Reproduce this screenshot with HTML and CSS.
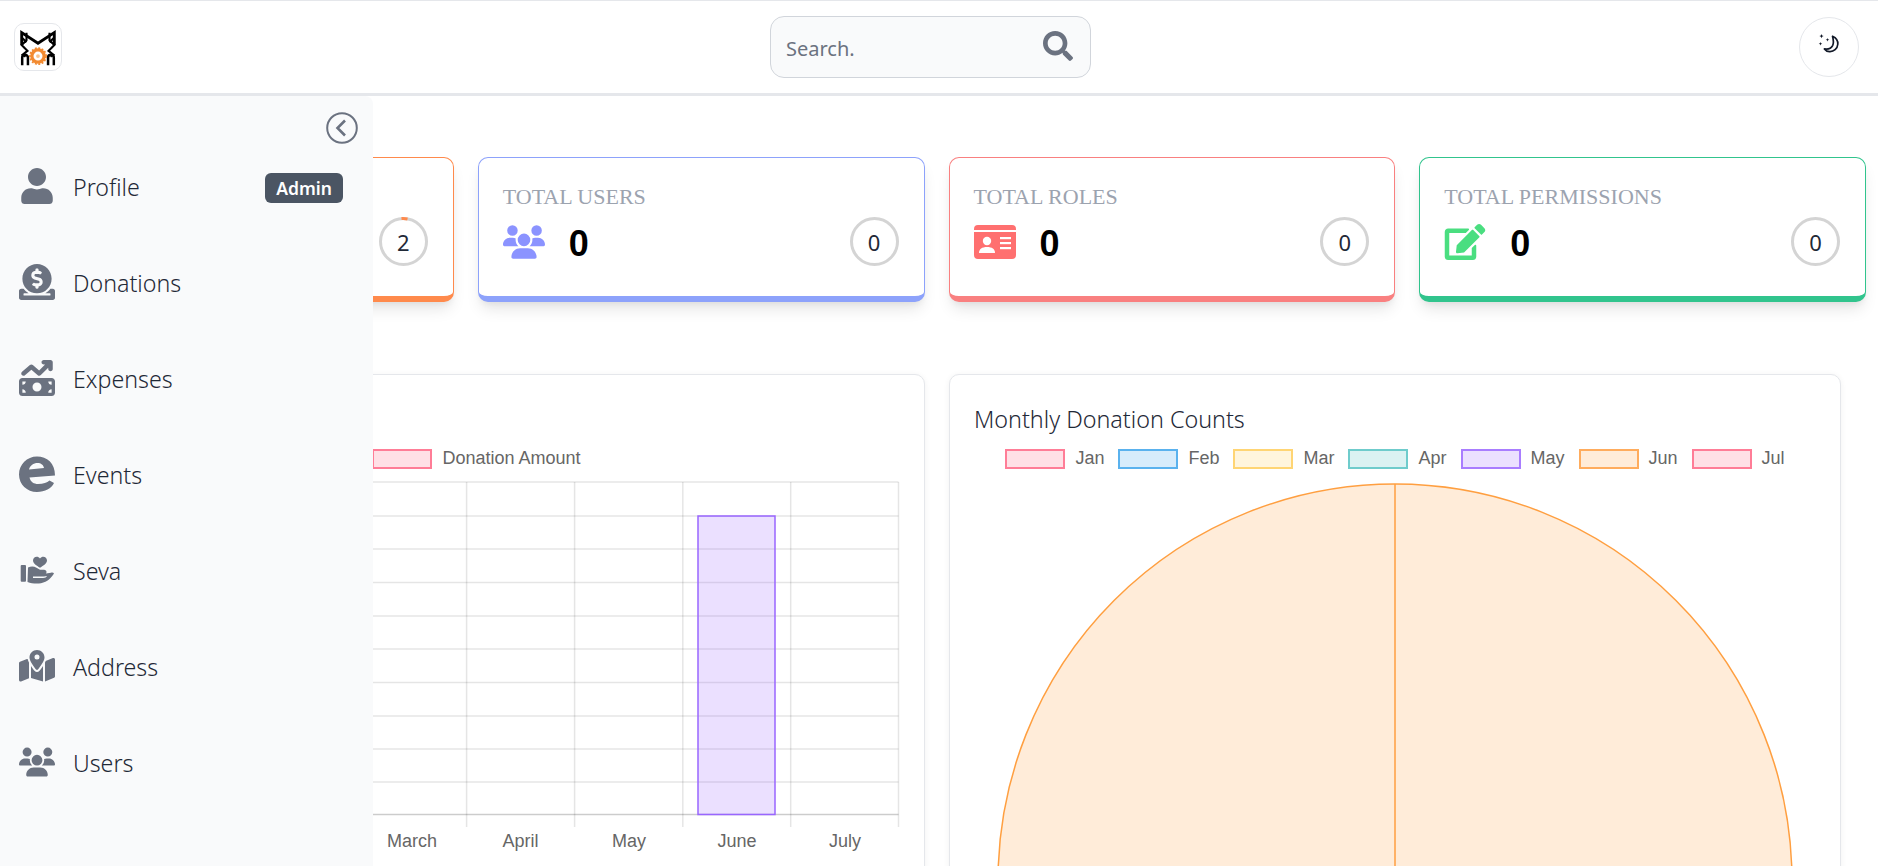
FILE: index.html
```html
<!DOCTYPE html>
<html lang="en">
<head>
<meta charset="utf-8">
<title>Dashboard</title>
<link rel="stylesheet" href="styles.css">
</head>
<body>
<header class="topbar">
  <div class="logo">
    <svg viewBox="0 0 48 48" class="logo-mark">
      <g fill="none" stroke="#000" stroke-width="2.200">
        <path d="M7 22V9l17 11L41 9v13" stroke-width="3"/>
        <path d="M12 9v8l-5 5 3 3 3 3-5 4 3 2M36 9v8l5 5-3 3-3 3 5 4-3 2M7 14l5 5M41 14l-5 5"/>
        <path d="M7.500 43v-8a3 3 0 0 1 6 0v8M34.500 43v-8a3 3 0 0 1 6 0v8" stroke-width="2.600"/>
      </g>
      <circle cx="24" cy="33.500" r="6.400" fill="#fff" stroke="#f28a30" stroke-width="3.400"/>
      <circle cx="24" cy="33.500" r="8.400" fill="none" stroke="#f28a30" stroke-width="1.800" stroke-dasharray="2 1.600"/>
      <circle cx="24" cy="33.500" r="2" fill="#f9c48e"/>
    </svg>
  </div>
  <div class="search">
    <span class="search-text">Search.</span>
    <svg class="search-icon" viewBox="0 0 512 512"><path d="M505 442.700L405.300 343c-4.500-4.500-10.600-7-17-7H372c27.600-35.300 44-79.700 44-128C416 93.100 322.900 0 208 0S0 93.100 0 208s93.100 208 208 208c48.300 0 92.700-16.400 128-44v16.300c0 6.400 2.500 12.500 7 17l99.700 99.700c9.400 9.400 24.600 9.400 33.900 0l28.300-28.300c9.400-9.400 9.400-24.600.1-34zM208 336c-70.700 0-128-57.200-128-128 0-70.700 57.200-128 128-128 70.700 0 128 57.200 128 128 0 70.700-57.200 128-128 128z"/></svg>
  </div>
  <div class="theme-btn">
    <svg viewBox="0 0 22 22" class="moon">
      <path d="M14.500 3.200c3.600 1.600 5.600 4.400 5.300 8-.4 4.600-4 7.600-8.200 7.400-2.200-.1-4-1-5.200-2.700 4 .6 6.800-.6 8.200-3.300 1.100-2.300 1-5.500-.1-9.400z" fill="none" stroke="#111827" stroke-width="1.700" stroke-linejoin="round"/>
      <path d="M3.500 1l.6 1.500 1.500.6-1.500.6-.6 1.500-.6-1.500-1.500-.6 1.500-.6zM9.500 5l.5 1.300 1.300.5-1.300.5-.5 1.300-.5-1.300-1.300-.5 1.300-.5zM2.500 9l.5 1.300 1.300.5-1.300.5-.5 1.300-.5-1.300L.7 10.800l1.300-.5z" fill="#111827"/>
    </svg>
  </div>
</header>

<aside class="sidebar">
  <div class="collapse-row">
    <svg class="collapse" viewBox="0 0 32 32"><circle cx="16" cy="16" r="14.800" fill="none" stroke="#6b7280" stroke-width="2"/><path d="M19 8.500 11.500 16l7.500 7.500" fill="none" stroke="#6b7280" stroke-width="2.600"/></svg>
  </div>
  <nav>
    <a class="nav-row">
      <svg class="nav-icon" viewBox="0 0 448 512"><path d="M224 256c70.700 0 128-57.300 128-128S294.700 0 224 0 96 57.300 96 128s57.300 128 128 128zm89.600 32h-16.700c-22.200 10.200-46.900 16-72.900 16s-50.600-5.800-72.900-16h-16.700C60.200 288 0 348.200 0 422.400V464c0 26.500 21.500 48 48 48h352c26.500 0 48-21.500 48-48v-41.600c0-74.200-60.200-134.400-134.400-134.400z"/></svg>
      <span class="nav-label">Profile</span>
      <span class="badge">Admin</span>
    </a>
    <a class="nav-row">
      <svg class="nav-icon" viewBox="0 0 512 512"><path d="M256 416c114.900 0 208-93.100 208-208S370.900 0 256 0 48 93.100 48 208s93.100 208 208 208zM233.800 97.400V80.600c0-9.200 7.400-16.600 16.600-16.600h11.100c9.200 0 16.600 7.400 16.600 16.600v17c15.500.8 30.500 6.100 43 15.400 5.600 4.100 6.200 12.300 1.200 17.100L306 145.600c-3.800 3.700-9.500 3.800-14 1-5.400-3.400-11.400-5.100-17.800-5.100h-38.900c-9 0-16.300 8.200-16.300 18.300 0 8.200 5 15.500 12.100 17.600l62.300 18.700c25.700 7.700 43.700 32.400 43.700 60.100 0 34-26.400 61.500-59.100 62.400v16.800c0 9.200-7.400 16.600-16.600 16.600h-11.100c-9.200 0-16.600-7.400-16.600-16.600v-17c-15.500-.8-30.500-6.100-43-15.400-5.600-4.100-6.200-12.300-1.200-17.100l16.300-15.500c3.800-3.700 9.500-3.800 14-1 5.400 3.400 11.400 5.100 17.800 5.100h38.900c9 0 16.300-8.200 16.300-18.300 0-8.200-5-15.500-12.100-17.600l-62.300-18.700c-25.700-7.700-43.700-32.400-43.700-60.100.1-34 26.400-61.500 59.100-62.400zM480 352h-32.500c-19.600 26-44.600 47.700-73 64h63.800c5.300 0 9.600 3.600 9.600 8v16c0 4.400-4.300 8-9.600 8H73.600c-5.300 0-9.600-3.600-9.600-8v-16c0-4.400 4.300-8 9.600-8h63.800c-28.400-16.300-53.300-38-73-64H32c-17.700 0-32 14.300-32 32v96c0 17.700 14.300 32 32 32h448c17.700 0 32-14.300 32-32v-96c0-17.700-14.300-32-32-32z"/></svg>
      <span class="nav-label">Donations</span>
    </a>
    <a class="nav-row">
      <svg class="nav-icon" viewBox="0 0 512 512"><path d="M470.700 9.400c3 3.100 5.300 6.600 6.900 10.300s2.400 7.800 2.400 12.200l0 .1v0 96c0 17.700-14.300 32-32 32s-32-14.300-32-32V109.300L310.600 214.600c-11.800 11.800-30.800 12.600-43.500 1.700L176 138.100 84.800 216.300c-13.400 11.500-33.600 9.900-45.100-3.500s-9.900-33.600 3.500-45.100l112-96c12-10.300 29.700-10.300 41.700 0l89.500 76.700L370.700 64H352c-17.700 0-32-14.300-32-32s14.300-32 32-32h96c8.800 0 16.800 3.600 22.600 9.300l.1 .1zM0 304c0-26.500 21.500-48 48-48H464c26.500 0 48 21.500 48 48V464c0 26.500-21.500 48-48 48H48c-26.500 0-48-21.500-48-48V304zM48 416v48H96c0-26.500-21.500-48-48-48zM96 304H48v48c26.500 0 48-21.500 48-48zM464 416c-26.500 0-48 21.500-48 48h48V416zM416 304c0 26.500 21.500 48 48 48V304H416zm-96 80a64 64 0 1 0 -128 0 64 64 0 1 0 128 0z"/></svg>
      <span class="nav-label">Expenses</span>
    </a>
    <a class="nav-row">
      <svg class="nav-icon" viewBox="0 0 36 36"><path fill-rule="evenodd" d="M18 .5C28 .5 36 7 36 19.500L10.500 21.500C11.500 26 15 28 19 28c5.500 0 9-1.500 11.500-3.500L35 27c-2.500 5.500-9 9-17 9C8 36 0 28.500 0 18.500S8 .5 18 .5zM10 13.500l15-1.500c-.5-3-3-5-6.500-5-4 0-7.500 2.500-8.500 6.500z"/></svg>
      <span class="nav-label">Events</span>
    </a>
    <a class="nav-row">
      <svg class="nav-icon" viewBox="0 0 36 36"><path d="M28 8.500c0-2.200-1.800-3.800-3.700-3.800-1.300 0-2.500.6-3.300 1.700-.8-1.100-2-1.700-3.300-1.700-1.900 0-3.700 1.600-3.700 3.800 0 3 3.500 5 7 7.200 3.500-2.200 7-4.200 7-7.200z"/><rect x="1.700" y="13" width="5.300" height="16.700" rx="1"/><path fill-rule="evenodd" d="M9 15.500c3-1.300 6-1.300 8.500.3l3.500 2h4c1.500 0 2.500 1 2.500 2.200 0 .5-.2 1-.5 1.500l5-.8c1.500-.3 2.500 0 3 .8-2.500 4-6.500 8.500-13 9.700-4.500.8-9.500.2-13.500-1.200zM14 26h10c2 0 3.500-1 4-2-1 .3-2 .5-3 .5H14z"/></svg>
      <span class="nav-label">Seva</span>
    </a>
    <a class="nav-row">
      <svg class="nav-icon" viewBox="0 0 576 512"><path d="M408 120c0 54.600-73.100 151.900-105.200 192c-7.700 9.600-22 9.600-29.600 0C241.100 271.900 168 174.600 168 120C168 53.700 221.700 0 288 0s120 53.700 120 120zm8 80.400c3.500-6.900 6.700-13.800 9.600-20.600c.5-1.200 1-2.500 1.500-3.700l116-46.400C558.900 123.400 576 135 576 152V422.800c0 9.800-6 18.600-15.100 22.300L416 503V200.400zM137.600 138.300c2.400 14.100 7.200 28.300 12.800 41.500c2.900 6.800 6.100 13.700 9.600 20.600V451.800L32.900 502.700C17.100 509 0 497.400 0 480.400V209.600c0-9.800 6-18.600 15.100-22.300l122.600-49zM327.800 332c13.900-17.400 35.700-45.700 56.200-77V504.300L192 449.400V255c20.500 31.300 42.300 59.600 56.200 77c20.500 25.600 59.100 25.600 79.600 0zM288 152a40 40 0 1 0 0-80 40 40 0 1 0 0 80z"/></svg>
      <span class="nav-label">Address</span>
    </a>
    <a class="nav-row">
      <svg class="nav-icon" viewBox="0 0 640 512"><path d="M144 0a80 80 0 1 1 0 160A80 80 0 1 1 144 0zM512 0a80 80 0 1 1 0 160A80 80 0 1 1 512 0zM0 298.700C0 239.800 47.800 192 106.700 192h42.700c15.900 0 31 3.500 44.600 9.700c-1.300 7.200-1.900 14.700-1.900 22.300c0 38.200 16.800 72.500 43.300 96c-.2 0-.4 0-.7 0H21.300C9.600 320 0 310.400 0 298.700zM405.300 320c-.2 0-.4 0-.7 0c26.600-23.500 43.300-57.800 43.300-96c0-7.600-.7-15-1.900-22.300c13.600-6.300 28.700-9.700 44.600-9.700h42.700C592.200 192 640 239.800 640 298.700c0 11.800-9.600 21.300-21.300 21.300H405.300zM224 224a96 96 0 1 1 192 0 96 96 0 1 1 -192 0zM128 485.300C128 411.700 187.700 352 261.300 352H378.700C452.300 352 512 411.700 512 485.300c0 14.700-11.900 26.700-26.700 26.700H154.700c-14.700 0-26.700-11.900-26.700-26.700z"/></svg>
      <span class="nav-label">Users</span>
    </a>
  </nav>
</aside>

<main class="content">
  <section class="stats">
    <article class="stat stat-orange">
      <div class="stat-title"></div>
      <div class="stat-row">
        <div class="ring">2<svg class="ring-arc" viewBox="0 0 49 49"><path d="M22.500 1.600a23 23 0 0 1 6 .4" fill="none" stroke="#ff8a4c" stroke-width="3"/></svg></div>
      </div>
    </article>
    <article class="stat stat-blue">
      <div class="stat-title">TOTAL USERS</div>
      <div class="stat-row">
        <svg class="stat-icon" viewBox="0 0 640 512"><path d="M144 0a80 80 0 1 1 0 160A80 80 0 1 1 144 0zM512 0a80 80 0 1 1 0 160A80 80 0 1 1 512 0zM0 298.700C0 239.800 47.800 192 106.700 192h42.700c15.900 0 31 3.500 44.600 9.700c-1.300 7.200-1.900 14.700-1.900 22.300c0 38.200 16.800 72.500 43.300 96c-.2 0-.4 0-.7 0H21.300C9.600 320 0 310.400 0 298.700zM405.300 320c-.2 0-.4 0-.7 0c26.600-23.500 43.300-57.800 43.300-96c0-7.600-.7-15-1.900-22.300c13.600-6.300 28.700-9.700 44.600-9.700h42.700C592.200 192 640 239.800 640 298.700c0 11.800-9.600 21.300-21.300 21.300H405.300zM224 224a96 96 0 1 1 192 0 96 96 0 1 1 -192 0zM128 485.300C128 411.700 187.700 352 261.300 352H378.700C452.300 352 512 411.700 512 485.300c0 14.700-11.900 26.700-26.700 26.700H154.700c-14.700 0-26.700-11.900-26.700-26.700z"/></svg>
        <span class="stat-value">0</span>
        <div class="ring">0</div>
      </div>
    </article>
    <article class="stat stat-red">
      <div class="stat-title">TOTAL ROLES</div>
      <div class="stat-row">
        <svg class="stat-icon" viewBox="0 0 42 34"><path d="M4 0h34a4 4 0 0 1 4 4v1H0V4a4 4 0 0 1 4-4zM0 7h42v23a4 4 0 0 1-4 4H4a4 4 0 0 1-4-4z"/><g fill="#fff"><circle cx="13" cy="16" r="4.200"/><path d="M5 28c0-4 3-6 8-6s8 2 8 6z"/><rect x="26" y="12" width="11" height="2.200"/><rect x="26" y="17" width="11" height="2.200"/><rect x="26" y="22" width="11" height="2.200"/></g></svg>
        <span class="stat-value">0</span>
        <div class="ring">0</div>
      </div>
    </article>
    <article class="stat stat-green">
      <div class="stat-title">TOTAL PERMISSIONS</div>
      <div class="stat-row">
        <svg class="stat-icon" viewBox="0 0 576 512"><path d="M402.600 83.200l90.200 90.200c3.800 3.800 3.800 10 0 13.800L274.400 405.600l-92.800 10.300c-12.400 1.400-22.900-9.100-21.500-21.500l10.300-92.800L388.800 83.200c3.800-3.800 10-3.800 13.800 0zm162-22.900l-48.800-48.800c-15.200-15.200-39.900-15.200-55.200 0l-35.400 35.400c-3.800 3.800-3.800 10 0 13.800l90.200 90.200c3.800 3.800 10 3.800 13.800 0l35.400-35.400c15.200-15.300 15.200-40 0-55.200zM384 346.200V448H64V128h229.800c3.200 0 6.200-1.300 8.500-3.500l40-40c7.600-7.600 2.200-20.500-8.500-20.500H48C21.500 64 0 85.500 0 112v352c0 26.500 21.500 48 48 48h352c26.500 0 48-21.500 48-48V306.200c0-10.700-12.900-16-20.500-8.500l-40 40c-2.200 2.300-3.500 5.300-3.500 8.500z"/></svg>
        <span class="stat-value">0</span>
        <div class="ring">0</div>
      </div>
    </article>
  </section>

  <section class="charts">
    <article class="chart-card">
      <h2 class="chart-title"></h2>
      <div class="legend legend-left">
        <span class="legend-item"><i class="swatch sw-pink"></i>Donation Amount</span>
      </div>
      <svg class="chart bar-chart" viewBox="0 0 842 400" width="842" height="400">
        <g class="grid">
          <path d="M84.400 4H840.500M84.400 38H840.500M84.400 71H840.500M84.400 104.500H840.500M84.400 138H840.500M84.400 171H840.500M84.400 204.500H840.500M84.400 238H840.500M84.400 271H840.500M84.400 304H840.500"/>
          <path d="M192.500 4V349M300.600 4V349M408.600 4V349M516.600 4V349M624.800 4V349M732.700 4V349M840.500 4V349"/>
        </g>
        <path class="axis" d="M84.400 336.500H840.500"/>
        <rect class="bar" x="640" y="38" width="77" height="298.500"/>
        <g class="ticks">
          <text x="354" y="369">March</text>
          <text x="462.600" y="369">April</text>
          <text x="570.900" y="369">May</text>
          <text x="679" y="369">June</text>
          <text x="787" y="369">July</text>
        </g>
      </svg>
    </article>
    <article class="chart-card">
      <h2 class="chart-title">Monthly Donation Counts</h2>
      <div class="legend">
        <span class="legend-item"><i class="swatch sw-pink"></i>Jan</span>
        <span class="legend-item"><i class="swatch sw-blue"></i>Feb</span>
        <span class="legend-item"><i class="swatch sw-yellow"></i>Mar</span>
        <span class="legend-item"><i class="swatch sw-teal"></i>Apr</span>
        <span class="legend-item"><i class="swatch sw-purple"></i>May</span>
        <span class="legend-item"><i class="swatch sw-orange"></i>Jun</span>
        <span class="legend-item"><i class="swatch sw-pink"></i>Jul</span>
      </div>
      <svg class="chart" viewBox="0 0 842 800" width="842" height="800">
        <circle class="pie" cx="421" cy="403" r="397"/>
        <path class="pie-line" d="M421 6V403"/>
      </svg>
    </article>
  </section>
</main>
</body>
</html>
```

FILE: styles.css
```css
* { box-sizing: border-box; }
html, body { margin: 0; padding: 0; height: 866px; overflow: hidden; background: #fff; }
body { font-family: "Noto Sans", sans-serif; color: #1f2937; position: relative; }

.topbar {
  height: 96px;
  border-top: 1px solid #e5e7eb;
  border-bottom: 3px solid #e5e7eb;
  display: grid;
  grid-template-columns: 756px 321px 1fr;
  align-items: center;
  padding: 0 19px 0 14px;
  background: #fff;
}
.logo { width: 48px; height: 48px; border: 1px solid #e5e7eb; border-radius: 10px; display: flex; }
.logo-mark { width: 100%; height: 100%; }
.search {
  height: 62px;
  background: #f9fafb;
  border: 1px solid #d1d5db;
  border-radius: 14px;
  display: flex;
  align-items: center;
  justify-content: space-between;
  padding: 0 17px 0 15px;
}
.search-text { font-size: 20px; color: #6b7280; margin-top: 2px; }
.search-icon { width: 30px; height: 30px; fill: #6b7280; margin-top: -2px; }
.theme-btn {
  justify-self: end;
  width: 60px; height: 60px;
  border: 1px solid #e5e7eb;
  border-radius: 50%;
  display: flex;
  align-items: flex-start;
  justify-content: center;
  padding-top: 15px;
}
.moon { width: 22px; height: 22px; }

.sidebar {
  position: absolute;
  top: 96px; left: 0;
  width: 373px;
  height: 770px;
  background: #f9fafb;
  border-top-right-radius: 8px;
  z-index: 5;
}
.collapse-row { height: 44px; display: flex; justify-content: flex-end; align-items: flex-start; padding: 16px 15px 0 0; }
.collapse { width: 32px; height: 32px; }
.nav-row { display: flex; align-items: center; height: 96px; padding: 0 30px 0 19px; }
.nav-icon { width: 36px; height: 36px; fill: #6b7280; margin: 0 18px 4px 0; flex: none; }
.nav-label { font-size: 23.2px; font-weight: 300; color: #1f2937; margin-bottom: 2px; }
.badge {
  margin-left: auto;
  width: 78px; height: 30px;
  background: #4b5563;
  color: #fff;
  border-radius: 6px;
  font-size: 17.5px;
  font-weight: 600;
  display: flex; align-items: center; justify-content: center;
}

.content { padding: 61px 12px 0 7px; }
.stats { display: grid; grid-template-columns: repeat(4, 1fr); gap: 24px; }
.stat {
  height: 145px;
  border: 1px solid;
  border-bottom-width: 6px;
  border-radius: 10px;
  padding: 22px 25px 0 24px;
  background: #fff;
  box-shadow: 0 10px 15px -3px rgba(0,0,0,.1), 0 4px 6px -2px rgba(0,0,0,.05);
}
.stat-orange { border-color: #ff8a4c; }
.stat-blue { border-color: #8da2fb; }
.stat-red { border-color: #f98080; }
.stat-green { border-color: #31c48d; }
.stat-title { font-family: "Liberation Serif", serif; font-size: 22px; line-height: 34px; height: 30px; color: #9ca3af; }
.stat-row { display: flex; align-items: center; margin-top: 7px; height: 49px; }
.stat-icon { width: 42px; height: 36px; flex: none; }
.stat-blue .stat-icon { fill: #8b93ff; }
.stat-red .stat-icon { fill: #ff7070; }
.stat-green .stat-icon { fill: #4ade80; }
.stat-value { font-family: "Liberation Sans", sans-serif; font-size: 36px; font-weight: 700; color: #000; margin: 4px 0 0 24px; }
.ring {
  position: relative;
  margin-left: auto;
  width: 49px; height: 49px;
  border: 3px solid #d4d4d4;
  border-radius: 50%;
  display: flex; align-items: center; justify-content: center;
  font-size: 22px;
  color: #1f2937;
}
.ring-arc { position: absolute; top: -3px; left: -3px; width: 49px; height: 49px; }

.charts { display: grid; grid-template-columns: repeat(2, 1fr); gap: 24px; margin: 72px 25px 0 26px; }
.chart-card {
  border: 1px solid #e5e7eb;
  border-radius: 10px;
  padding: 30px 24px 0;
  background: #fff;
  box-shadow: 0 1px 6px rgba(0,0,0,.06);
}
.chart-title { margin: 0; font-size: 23.3px; font-weight: 300; line-height: 28px; height: 28px; color: #1f2937; }
.legend { display: flex; justify-content: center; gap: 14px; margin-top: 16px; height: 20px; font-family: "Liberation Sans", sans-serif; font-size: 18px; color: #666; }
.legend-left { padding-right: 5px; }
.legend-item { display: flex; align-items: flex-start; gap: 10px; line-height: 18px; white-space: nowrap; }
.swatch { display: block; width: 60px; height: 20px; border: 2px solid; }
.sw-pink { background: rgba(255,99,132,.2); border-color: #ff7d97; }
.sw-blue { background: rgba(54,162,235,.2); border-color: #5ab2ee; }
.sw-yellow { background: rgba(255,205,86,.2); border-color: #ffd574; }
.sw-teal { background: rgba(75,192,192,.2); border-color: #6fcccc; }
.sw-purple { background: rgba(153,102,255,.2); border-color: #a97dff; }
.sw-orange { background: rgba(255,159,64,.2); border-color: #ffac5d; }
.chart { display: block; margin-top: 9px; }
.grid path { stroke: rgba(0,0,0,.1); stroke-width: 1.5; fill: none; }
.axis { stroke: rgba(0,0,0,.2); stroke-width: 1.5; fill: none; }
.bar { fill: rgba(153,102,255,.2); stroke: #9966ff; stroke-width: 1.5; }
.ticks text { font-family: "Liberation Sans", sans-serif; font-size: 18px; fill: #666; text-anchor: middle; }
.pie { fill: rgba(255,159,64,.2); stroke: #ff9f40; stroke-width: 1.5; }
.pie-line { stroke: #ff9f40; stroke-width: 1.5; fill: none; }
```
